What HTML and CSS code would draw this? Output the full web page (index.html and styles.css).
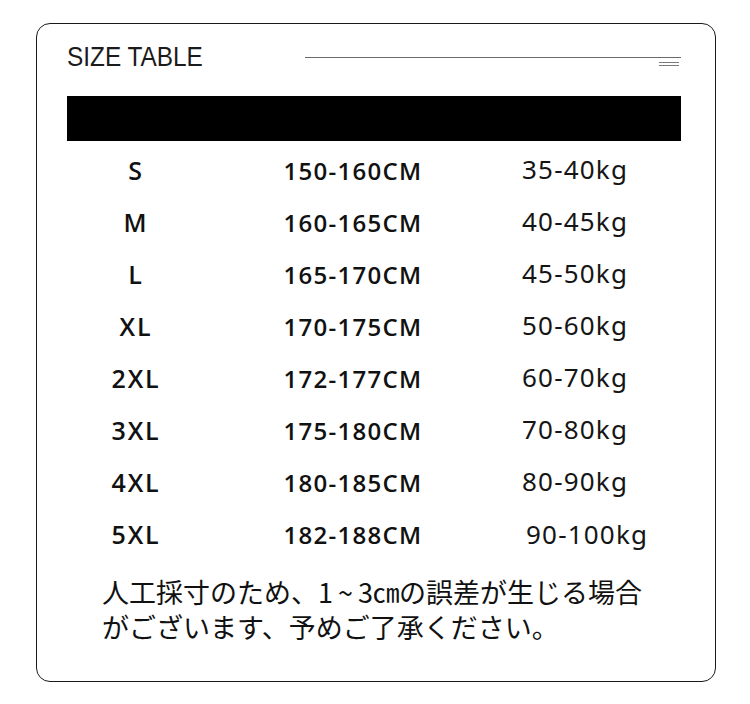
FILE: index.html
```html
<!DOCTYPE html>
<html lang="ja">
<head>
<meta charset="utf-8">
<title>SIZE TABLE</title>
<link rel="stylesheet" href="styles.css">
</head>
<body>
<div class="card">
  <div class="head">
    <h1 class="title">SIZE TABLE</h1>
    <div class="rule">
      <span class="rule-long"></span>
      <span class="rule-mark"><i></i><i></i></span>
    </div>
  </div>
  <div class="bar"></div>
  <div class="table">
    <div class="row"><span class="c-size">S</span><span class="c-h">150-160CM</span><span class="c-w">35-40kg</span></div>
    <div class="row"><span class="c-size">M</span><span class="c-h">160-165CM</span><span class="c-w">40-45kg</span></div>
    <div class="row"><span class="c-size">L</span><span class="c-h">165-170CM</span><span class="c-w">45-50kg</span></div>
    <div class="row"><span class="c-size">XL</span><span class="c-h">170-175CM</span><span class="c-w">50-60kg</span></div>
    <div class="row"><span class="c-size">2XL</span><span class="c-h">172-177CM</span><span class="c-w">60-70kg</span></div>
    <div class="row"><span class="c-size">3XL</span><span class="c-h">175-180CM</span><span class="c-w">70-80kg</span></div>
    <div class="row"><span class="c-size">4XL</span><span class="c-h">180-185CM</span><span class="c-w">80-90kg</span></div>
    <div class="row"><span class="c-size">5XL</span><span class="c-h">182-188CM</span><span class="c-w c-w-shift">90-100kg</span></div>
  </div>
  <p class="note">人工採寸のため、<span class="num">1 ~ 3㎝</span>の誤差が生じる場合<br>がございます、予めご了承ください。</p>
</div>
</body>
</html>
```

FILE: styles.css
```css
html, body {
  margin: 0;
  padding: 0;
  background: #ffffff;
}
body {
  width: 750px;
  height: 704px;
  overflow: hidden;
  font-family: "Liberation Sans", Arial, sans-serif;
  color: #111;
}
.card {
  box-sizing: border-box;
  margin: 23px 0 0 36px;
  width: 680px;
  height: 659px;
  border: 1.5px solid #1a1a1a;
  border-radius: 14px;
  padding: 0 34px 0 30px;
  background: #fff;
}
.head {
  display: flex;
  align-items: flex-start;
  height: 72px;
}
.title {
  margin: 17px 0 0 0;
  font-family: "Liberation Sans", Arial, sans-serif;
  font-weight: 400;
  font-size: 28px;
  line-height: 32px;
  color: #1b1b1b;
  flex: none;
  width: 238px;
  white-space: nowrap;
  transform: scaleX(0.87);
  transform-origin: left center;
}
.rule {
  flex: 1;
  margin-top: 33px;
  display: flex;
  flex-direction: column;
  align-items: flex-end;
}
.rule-long {
  display: block;
  width: 100%;
  height: 1px;
  background: #6a6a6a;
}
.rule-mark {
  display: flex;
  flex-direction: column;
  gap: 2px;
  margin-top: 4px;
  margin-right: 2px;
}
.rule-mark i {
  display: block;
  width: 20px;
  height: 1px;
  background: #7a7a7a;
}
.bar {
  height: 45px;
  background: #000;
}
.table {
  margin-top: 3px;
}
.row {
  display: grid;
  grid-template-columns: 138px 296px 1fr;
  align-items: center;
  height: 52px;
}
.c-size {
  text-align: center;
  font-family: "Open Sans", "Noto Sans", sans-serif;
  font-weight: 600;
  font-size: 25px;
  letter-spacing: 1.8px;
  color: #111;
}
.c-h {
  text-align: center;
  font-family: "Open Sans", "Noto Sans", sans-serif;
  font-weight: 600;
  font-size: 24px;
  letter-spacing: 1.3px;
  color: #111;
}
.c-w {
  padding-left: 21px;
  font-family: "Noto Sans", "Open Sans", sans-serif;
  font-weight: 400;
  font-size: 26px;
  letter-spacing: 1.2px;
  color: #151515;
  margin-top: -3px;
}
.c-w-shift {
  padding-left: 25px;
  margin-top: 0;
}
.note {
  margin: 14px 0 0 35px;
  font-family: "Noto Sans CJK JP", "Noto Sans", sans-serif;
  font-size: 27px;
  line-height: 35px;
  color: #111;
  white-space: nowrap;
}
.num {
  letter-spacing: -0.5px;
}
```
